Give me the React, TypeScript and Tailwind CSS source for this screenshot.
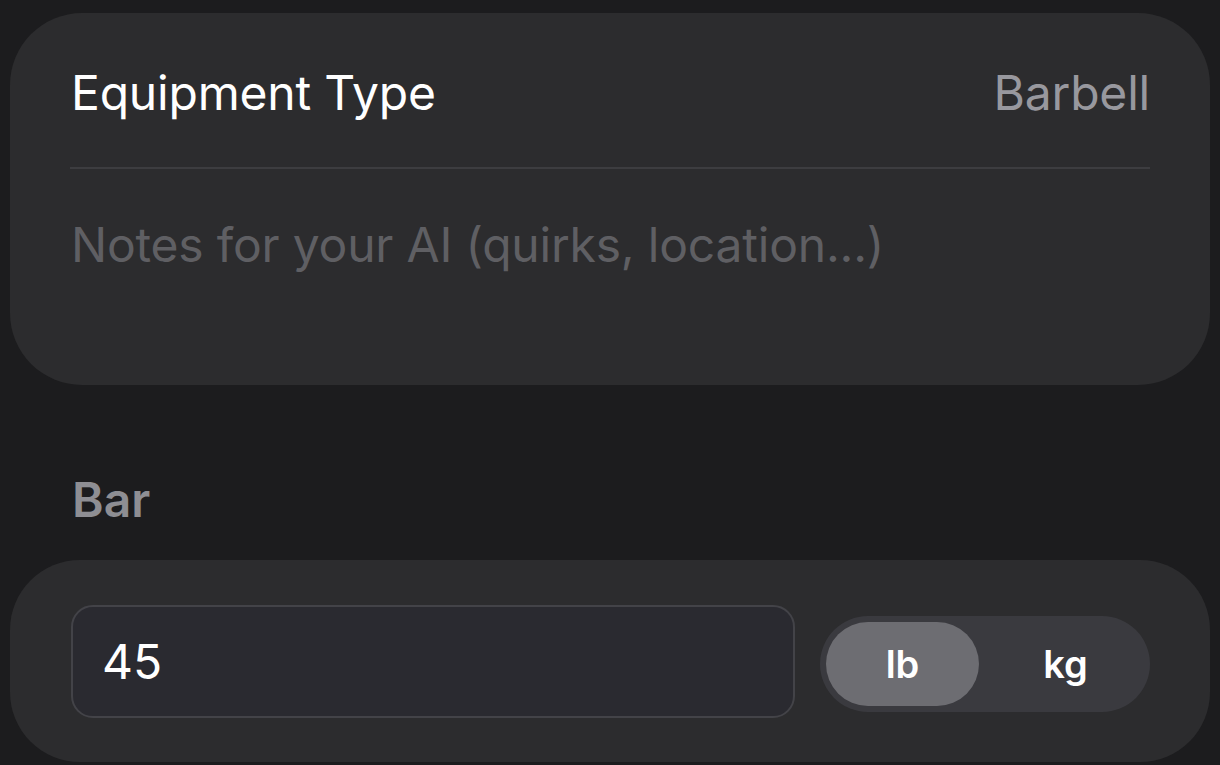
export default function App() {
  return (
    <div
      className="w-[1220px] h-[765px] overflow-hidden bg-[#1c1c1e] px-[10px] pt-[13px]"
      style={{ fontFamily: 'Inter, "Noto Sans", sans-serif' }}
    >
      {/* Equipment card */}
      <div className="h-[372px] rounded-[72px] bg-[#2c2c2e] pl-[60px] pr-[60px]">
        <div className="flex h-[154px] items-center justify-between pt-[6px]">
          <span className="pl-[1px] text-[48px] tracking-[-0.2px] text-white">Equipment Type</span>
          <span className="text-[48px] tracking-[-0.2px] text-[#98989e]">Barbell</span>
        </div>
        <div className="h-[2px] bg-[#3d3d40]" />
        <div className="pl-[1px] pt-[46px] text-[48px] leading-[60px] tracking-[-0.2px] text-[#5f5f63]">
          Notes for your AI (quirks, location...)
        </div>
      </div>

      {/* Bar section */}
      <div className="flex h-[175px] items-end pb-[36px] pl-[62px]">
        <span className="text-[48px] font-semibold leading-none text-[#8e8e93]">Bar</span>
      </div>

      <div className="flex h-[202px] items-start gap-[25px] rounded-[70px] bg-[#2c2c2e] pl-[61px] pr-[60px] pt-[45px]">
        <div className="flex h-[113px] flex-1 items-center rounded-[22px] border-2 border-[#434348] bg-[#2a2a30] pl-[29px]">
          <span className="text-[48px] text-white">45</span>
        </div>
        <div className="mt-[11px] flex h-[96px] w-[330px] items-center rounded-full bg-[#3a3a3f] p-[6px]">
          <div className="flex h-full w-[153px] items-center justify-center rounded-full bg-[#6d6d72] text-[38px] font-semibold text-white">
            lb
          </div>
          <div className="flex h-full flex-1 items-center justify-center pl-[8px] text-[38px] font-semibold text-white">
            kg
          </div>
        </div>
      </div>
    </div>
  );
}
